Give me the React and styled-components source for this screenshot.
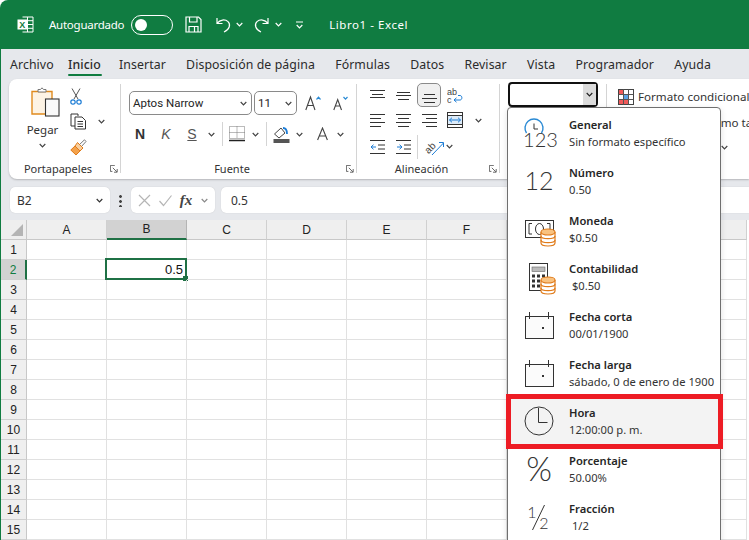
import React from "react";
import styled, { createGlobalStyle } from "styled-components";

const Global = createGlobalStyle`
  html, body { margin: 0; padding: 0; background: #fff; }
  body { font-family: "Noto Sans", "Open Sans", sans-serif; color: #242424; }
  * { box-sizing: border-box; }
`;

const Win = styled.div`
  position: relative; width: 749px; height: 540px; overflow: hidden; background: #fff;
  display: flex; flex-direction: column;
`;
const TitleBar = styled.header`
  height: 49px; flex: none; background: #107c41; color: #fff; display: flex; align-items: center;
  padding-left: 17px; border-top-left-radius: 8px; font-size: 11.5px;
`;
const TitleItem = styled.span`
  display: flex; align-items: center; flex: none; margin-left: ${p => p.$ml || 0}px; letter-spacing: ${p => p.$ls || 0}px;
`;
const Toggle = styled.span`
  width: 42px; height: 20px; border: 1.5px solid #fff; border-radius: 10px; display: flex; align-items: center; padding-left: 3px;
  &::before { content: ""; width: 12px; height: 12px; border-radius: 50%; background: #fff; }
`;
const Body = styled.div`
  flex: 1; min-height: 0; background: #e6e8ec; border-left: 1px solid #107c41; display: flex; flex-direction: column;
`;
const Tabs = styled.nav`
  height: 30px; flex: none; display: flex; padding-left: 9px; gap: 20.2px; font-size: 12.3px;
`;
const Tab = styled.span`
  position: relative; line-height: 31px; white-space: nowrap; color: #2b2b2b; letter-spacing: .1px;
  font-weight: ${p => p.$active ? 500 : 400};
  ${p => p.$active && `margin: 0 -2px 0 -6px; &::after { content:""; position:absolute; left:0; right:-1px; bottom:3px; height:2.5px; border-radius:2px; background:#107c41; }`}
`;
const Ribbon = styled.section`
  height: 100px; flex: none; margin-left: 8px; background: #fff; border-radius: 8px 0 0 8px; display: flex; overflow: hidden;
  box-shadow: 0 1px 2px rgba(0,0,0,.22); padding: 5px 0 1px;
`;
const Group = styled.div`
  position: relative; flex: none; width: ${p => p.$w}px; display: flex; flex-direction: column;
  ${p => !p.$last && `&::after { content:""; position:absolute; top:0; right:0; bottom:5px; width:1px; background:#d4d4d4; }`}
`;
const GroupBody = styled.div`
  flex: 1; min-height: 0; display: flex;
`;
const GroupLabel = styled.div`
  flex: none; height: 18px; line-height: 18px; font-size: 11px; color: #333; padding-right: 14px;
  display: flex; align-items: center; justify-content: center; position: relative;
`;
const Launcher = styled.svg`
  position: absolute; right: 3px; bottom: 5px; width: 8px; height: 8px;
`;
const PasteCol = styled.div`
  width: 61px; display: flex; flex-direction: column; align-items: center; font-size: 11.5px; padding-top: 3px; padding-left: 6px;
`;
const PasteClip = styled.span`
  display: flex; margin-left: 5px;
`;
const PasteLabel = styled.span`
  margin-top: 5px; line-height: 16px; color: #333;
`;
const PasteChev = styled.span`
  display: flex; margin-top: 5px;
`;
const ClipCol = styled.div`
  display: flex; flex-direction: column;
`;
const ClipRow = styled.div`
  height: 26px; display: flex; align-items: center; gap: ${p => p.$gap ?? 11}px;
`;
const FontCol = styled.div`
  display: flex; flex-direction: column; gap: 7px; padding: 7px 0 0 8px;
`;
const FontRow = styled.div`
  height: 24px; display: flex; align-items: center;
`;
const Select = styled.div`
  width: ${p => p.$w}px; height: 24px; margin-right: ${p => p.$mr || 0}px; border: 1px solid #8a8a8a; border-radius: 5px;
  display: flex; align-items: center; justify-content: space-between; padding: 0 4px 0 3px; font-size: 11.5px; color: #242424; flex: none;
  font-family: "Roboto", sans-serif;
`;
const Slot = styled.span`
  display: flex; align-items: center; justify-content: center; flex: none; width: ${p => p.$w}px; margin-left: ${p => p.$ml || 0}px; height: 24px;
`;
const VSep = styled.span`
  flex: none; width: 1px; height: 24px; background: #d4d4d4; margin: 0 ${p => p.$mr ?? 6}px 0 ${p => p.$ml ?? 6}px;
`;
const GlyphBold = styled.span`
  font-size: 14px; font-weight: 700; color: #333; font-family: "Liberation Sans", sans-serif;
`;
const GlyphItalic = styled.span`
  font-size: 14px; font-style: italic; color: #555; font-family: "Liberation Sans", sans-serif;
`;
const GlyphUnder = styled.span`
  font-size: 14px; color: #555; text-decoration: underline; font-family: "Liberation Sans", sans-serif;
`;
const AlignGrid = styled.div`
  display: grid; grid-template-columns: repeat(4, 26px); grid-template-rows: 24px 26px 27px; margin-top: -1px; padding-left: 7px;
  align-items: center; justify-items: center;
`;
const AlignTop = styled.span`
  width: 24px; height: 24px; display: flex; align-items: center; justify-content: center; border-radius: 5px;
  border: ${p => p.$on ? "1px solid #8a8a8a" : "1px solid transparent"}; background: ${p => p.$on ? "#f0f0f0" : "transparent"};
`;
const MergeCell = styled.div`
  justify-self: start; padding-left: 5px; display: flex; align-items: center; gap: 12px;
`;
const OrientCell = styled.div`
  grid-column: 3 / span 2; justify-self: start; display: flex; align-items: center; gap: 1px;
`;
const NumSelect = styled.div`
  margin: -2px 0 0 8px; width: 90px; height: 25px; border: 2px solid #111; border-radius: 4px; display: flex; justify-content: flex-end; background: #fff;
`;
const NumArrow = styled.span`
  width: 13px; background: #dcdcdc; display: flex; align-items: center; justify-content: center;
`;
const StyleCol = styled.div`
  display: flex; flex-direction: column; padding: 0 0 0 11px; font-size: 11.6px; color: #333;
`;
const StyleRow = styled.div`
  height: 25.5px; display: flex; align-items: center; gap: 4px; white-space: nowrap;
`;
const ClippedLabel = styled.span`
  width: 79px; overflow: hidden;
`;
const FormulaBar = styled.div`
  flex: none; height: 26px; margin-top: 8px; display: flex; align-items: stretch; padding-left: 9px;
`;
const Box = styled.div`
  flex: ${p => p.$grow ? 1 : "none"}; width: ${p => p.$w ? p.$w + "px" : "auto"}; margin-left: ${p => p.$ml || 0}px;
  background: #fff; border-radius: ${p => p.$grow ? "5px 0 0 5px" : "5px"}; display: flex; align-items: center; box-shadow: 0 0 1px rgba(0,0,0,.2);
  justify-content: ${p => p.$between ? "space-between" : "flex-start"}; padding: 0 6px 0 ${p => p.$pl ?? 7}px; font-size: 12px; color: #333;
`;
const Dots = styled.span`
  margin-left: 9px; width: 3px; height: 13px; align-self: center;
  background: radial-gradient(circle at center, #444 1.3px, transparent 1.5px) 0 0 / 3px 5px repeat-y;
`;
const Fx = styled.span`
  font-family: "Liberation Serif", serif; font-style: italic; font-weight: 700; font-size: 15px; color: #444;
`;
const Sheet = styled.div`
  flex: none; margin-top: 7px; display: grid; grid-template-columns: 26px repeat(9, 80px); grid-auto-rows: 20px; background: #fff;
  font-family: "Liberation Sans", sans-serif;
`;
const Corner = styled.div`
  background: #eeeeee; border-right: 1px solid #c8c8c8; border-bottom: 1px solid #c8c8c8; position: relative;
  &::after { content:""; position:absolute; right:3px; bottom:3px; border-style:solid; border-width:0 0 12px 12px; border-color:transparent transparent #b4b4b4 transparent; }
`;
const ColHead = styled.div`
  display: flex; align-items: center; justify-content: center; font-size: 12px; color: #222;
  background: ${p => p.$on ? "#d2d2d2" : "#efefef"}; border-right: 1px solid ${p => p.$on ? "#b4b4b4" : "#d0d0d0"};
  border-bottom: ${p => p.$on ? "2px solid #1f7145" : "1px solid #c8c8c8"};
`;
const RowHead = styled.div`
  display: flex; align-items: center; justify-content: center; font-size: 12px; color: ${p => p.$on ? "#107c41" : "#222"};
  background: ${p => p.$on ? "#d2d2d2" : "#efefef"}; border-bottom: 1px solid #d0d0d0;
  border-right: ${p => p.$on ? "2px solid #1f7145" : "1px solid #c8c8c8"};
`;
const Cell = styled.div`
  position: relative; border-right: 1px solid #e1e1e1; border-bottom: 1px solid #e1e1e1; font-size: 13px; color: #111;
  display: flex; align-items: center; justify-content: flex-end; padding-right: 3px;
  ${p => p.$active && `
    &::before { content:""; position:absolute; top:-2px; left:-2px; right:-1px; bottom:-1px; border:2px solid #1f7145; }
    &::after { content:""; position:absolute; right:-2px; bottom:-2px; width:5px; height:5px; background:#1f7145; }
  `}
`;
const Menu = styled.div`
  position: absolute; left: 507px; top: 107px; width: 214px; height: 445px; background: #fff; border: 1px solid #6f6f6f; border-radius: 4px;
  box-shadow: 0 2px 6px rgba(0,0,0,.12);
`;
const Item = styled.div`
  position: relative; height: 48px; display: flex; align-items: center; background: ${p => p.$on ? "#f3f3f3" : "transparent"};
  ${p => p.$on && `&::after { content:""; position:absolute; top:-2px; left:-2px; right:-3px; bottom:-5px; border:5px solid #ed1c24; }`}
`;
const ItemIcon = styled.svg`
  flex: none; width: 61px; height: 48px;
`;
const ItemText = styled.div`
  display: flex; flex-direction: column; margin-top: 2px;
`;
const ItemTitle = styled.span`
  font-size: 11.2px; font-weight: 600; line-height: 17px; color: #262626;
`;
const ItemSub = styled.span`
  font-size: 11.2px; line-height: 17px; color: #333; white-space: pre;
`;

const Chev = ({ c = "#444", w = 7 }) => (
  <svg width={w} height="5" viewBox="0 0 7 5"><path d="M.7 1 3.500 3.800 6.300 1" fill="none" stroke={c} strokeWidth="1.2" /></svg>
);
const S = ({ w = 16, h = 16, vb, children }) => (
  <svg width={w} height={h} viewBox={vb || `0 0 ${w} ${h}`} fill="none" stroke="#333" strokeWidth="1">{children}</svg>
);

const ExcelLogo = () => (
  <svg width="17" height="17" viewBox="0 0 17 17">
    <path d="M5.500 1H16V16H5.500" fill="none" stroke="#fff" strokeWidth="1" />
    <path d="M5.500 4.700H16M5.500 8.500H16M5.500 12.300H16M10.500 1V16" stroke="#fff" strokeWidth="1" />
    <rect x="0.5" y="3.500" width="9.500" height="10" fill="#fff" />
    <text x="5.200" y="12" fontSize="9" fontWeight="700" textAnchor="middle" fill="#107c41" fontFamily="Liberation Sans, sans-serif">X</text>
  </svg>
);
const W = { fill: "none", stroke: "#fff", strokeWidth: 1.2 };
const SaveI = () => (
  <svg width="17" height="17" viewBox="0 0 17 17"><path d="M1 1H13.500L16 3.500V16H1Z" {...W} /><path d="M4.500 1V6H12V1M4 16V10.500H13V16M9.500 10.500V16" {...W} /></svg>
);
const UndoI = () => (
  <svg width="15" height="16" viewBox="0 0 15 16"><path d="M1 1V6.500H6.500M1.300 6.200C4 2.500 9 2 12 4.600 15 7.500 13.500 12.500 8 15" {...W} /></svg>
);
const RedoI = () => (
  <svg width="15" height="16" viewBox="0 0 15 16"><path d="M14 1V6.500H8.500M13.700 6.200C11 2.500 6 2 3 4.600 0 7.500 1.500 12.500 7 15" {...W} /></svg>
);
const Customize = () => (
  <svg width="7" height="8" viewBox="0 0 7 8"><path d="M0 1H7M.7 4 3.500 6.800 6.300 4" {...W} /></svg>
);

const PasteI = () => (
  <svg width="29" height="30" viewBox="0 0 29 30" fill="none">
    <path d="M1 4.500H21V27H1Z" fill="#fdf3e4" stroke="#e08a1e" strokeWidth="1.4" />
    <path d="M7 5V2.500H9.500L11 .8 12.500 2.500H15V5Z" fill="#fff" stroke="#777" />
    <rect x="14.500" y="12" width="13.500" height="17" fill="#fafafa" stroke="#333" strokeWidth="1.1" />
  </svg>
);
const CutI = () => (
  <svg width="12" height="17" viewBox="0 0 12 17" fill="none">
    <path d="M2 .5 8 11M10 .5 4 11" stroke="#555" />
    <circle cx="3" cy="14" r="2.200" stroke="#1c7cd5" strokeWidth="1.200" /><circle cx="9" cy="14" r="2.200" stroke="#1c7cd5" strokeWidth="1.200" />
  </svg>
);
const CopyI = () => (
  <S w={17} h={17}>
    <path d="M5 13H1V1H8V3" /><path d="M5 4H12L15.500 7.500V16H5ZM7.500 8.500H13M7.500 11H13M7.500 13.500H13" />
  </S>
);
const BrushI = () => (
  <svg width="17" height="17" viewBox="0 0 17 17" fill="none">
    <path d="M9 6 14.500 .8 16 2.500 11 8" stroke="#777" />
    <path d="M7.500 3.500 13 9 10 12 5 7Z" fill="#f8cf9e" stroke="#e07b1a" />
    <path d="M5 7 .8 11 6 16 10 12Z" fill="#f3a24c" stroke="#e07b1a" />
  </svg>
);
const LaunchI = () => (
  <Launcher viewBox="0 0 10 10" fill="none" stroke="#444"><path d="M6 .5H.5V8H3" /><path d="M3.500 3.500 8.500 8.500M5 9H9V5" /></Launcher>
);
const GrowA = ({ up }) => (
  <svg width="17" height="17" viewBox="0 0 17 17" fill="none">
    <path d={up ? "M.8 15 5.500 2 10 15M2.500 10.500H8.500" : "M.8 15 4.700 4.500 8.500 15M2.200 11H7.200"} stroke="#444" strokeWidth="1.100" />
    <path d={up ? "M11.500 4.500 13.500 2.200 15.500 4.500" : "M10.500 2 12.500 4.200 14.500 2"} stroke="#2a8ad4" strokeWidth="1.200" />
  </svg>
);
const BordersI = () => (
  <svg width="16" height="16" viewBox="0 0 16 16" fill="none">
    <path d="M.5 .5H15.500V12.500H.5ZM8 .5V12.500M.5 6.500H15.500" stroke="#777" strokeDasharray="1 1" />
    <path d="M0 14.500H16" stroke="#222" strokeWidth="1.400" />
  </svg>
);
const FillI = () => (
  <svg width="17" height="17" viewBox="0 0 17 17" fill="none">
    <path d="M1.500 8 8 2 12 7 6 12Z" stroke="#444" /><path d="M10 2C13 2 14 5 14 8" stroke="#1c7cd5" strokeWidth="1.800" />
    <rect x="0.5" y="13" width="16" height="4" fill="#555" stroke="none" />
  </svg>
);
const FontColor = () => (
  <svg width="11" height="14" viewBox="0 0 11 14" fill="none"><path d="M.6 13 5.500 1 10.400 13M2.200 9H8.800" stroke="#444" strokeWidth="1.100" /></svg>
);
const Lines = ({ rows, w = 15 }) => (
  <svg width={w} height="16" viewBox={`0 0 ${w} 16`} fill="none" stroke="#333">
    {rows.map(([y, a, b], i) => <path key={i} d={`M${a} ${y}H${b}`} />)}
  </svg>
);
const WrapI = () => (
  <svg width="16" height="17" viewBox="0 0 16 17" fill="none">
    <text x="0" y="7.500" fontSize="9" fill="#444" fontFamily="Liberation Sans, sans-serif">ab</text>
    <text x="0" y="15.500" fontSize="9" fill="#444" fontFamily="Liberation Sans, sans-serif">c</text>
    <path d="M7 13H13C15.500 13 15.500 8.500 13 8.500H11M9.500 10.800 7 13 9.500 15.200" stroke="#1c7cd5" />
  </svg>
);
const MergeI = () => (
  <svg width="16" height="16" viewBox="0 0 16 16" fill="none">
    <rect x=".5" y=".5" width="15" height="15" stroke="#333" /><path d="M.5 3.500H15.500M.5 12.500H15.500" stroke="#333" />
    <rect x="1" y="4" width="14" height="8" fill="#dcebf9" />
    <path d="M2.500 8H13.500M5 5.700 2.500 8 5 10.300M11 5.700 13.500 8 11 10.300" stroke="#1c7cd5" />
  </svg>
);
const IndentI = ({ out }) => (
  <svg width="15" height="14" viewBox="0 0 15 14" fill="none">
    <path d="M0 .5H15M8 5H15M8 9H15M0 13.500H15" stroke="#333" />
    <path d={out ? "M6 7H1M3.500 4.700 1 7 3.500 9.300" : "M1 7H6M3.500 4.700 6 7 3.500 9.300"} stroke="#1c7cd5" />
  </svg>
);
const OrientI = () => (
  <svg width="20" height="18" viewBox="0 0 20 18" fill="none">
    <text x="1" y="14" fontSize="10" fill="#444" transform="rotate(-45 5 12)" fontFamily="Liberation Sans, sans-serif">ab</text>
    <path d="M7 17 18.500 5M14 4.500H18.500V9" stroke="#1c7cd5" />
  </svg>
);
const CondI = () => (
  <svg width="16" height="16" viewBox="0 0 16 16" fill="none">
    <rect x=".5" y=".5" width="15" height="15" fill="#fff" stroke="#444" />
    <rect x="1" y="1" width="4.500" height="4.500" fill="#f05a5a" /><rect x="1" y="10.500" width="9" height="4.500" fill="#f05a5a" /><rect x="5.500" y="5.500" width="4.500" height="4.500" fill="#5aa4e6" />
    <path d="M5.500 .5V15.500M10.500 .5V15.500M.5 5.500H15.500M.5 10.500H15.500" stroke="#555" />
  </svg>
);

const T = { fontFamily: "Lato, 'Open Sans', sans-serif", fontWeight: 300, fill: "#333", stroke: "none" };
const Coins = ({ x = 40, y = 26 }) => (
  <g fill="#fff" stroke="#e07b1a" strokeWidth="1.200">
    <path d={`M${x - 7} ${y}V${y + 11}C${x - 7} ${y + 15} ${x + 7} ${y + 15} ${x + 7} ${y + 11}V${y}`} />
    <ellipse cx={x} cy={y} rx="7" ry="3" fill="#f9c27f" />
    <path d={`M${x - 7} ${y + 4}C${x - 7} ${y + 7.500} ${x + 7} ${y + 7.500} ${x + 7} ${y + 4}M${x - 7} ${y + 8}C${x - 7} ${y + 11.500} ${x + 7} ${y + 11.500} ${x + 7} ${y + 8}`} fill="none" />
  </g>
);
const CalIcon = ({ top = 16 }) => (
  <g fill="none" stroke="#333">
    <rect x="17.500" y={top + .5} width="28" height="22" fill="#fbfbfb" />
    <path d={`M21.500 ${top - 4}V${top + 3}M40.500 ${top - 4}V${top + 3}`} />
    <rect x="34" y={top + 11} width="2" height="2" fill="#333" stroke="none" />
  </g>
);
const icons = {
  general: <>
    <path d="M18.500 25A9 9 0 1 1 33.500 25" fill="none" stroke="#2a8ad4" strokeWidth="1.400" />
    <path d="M26 15.500V21H30" fill="none" stroke="#333" />
    <text x="32.500" y="39" fontSize="20" textAnchor="middle" style={T}>123</text>
  </>,
  number: <text x="31" y="34" fontSize="25" textAnchor="middle" style={T}>12</text>,
  money: <g>
    <rect x="17.500" y="16.500" width="28" height="17" fill="none" stroke="#333" />
    <path d="M24 19.500H21V30H24M39 19.500H42V30H39" fill="none" stroke="#333" />
    <ellipse cx="31.500" cy="25" rx="4" ry="5.500" fill="none" stroke="#333" />
    <Coins y={28} />
  </g>,
  account: <g>
    <rect x="21.500" y="11.500" width="18" height="27" fill="#fff" stroke="#333" />
    <rect x="24" y="15" width="13" height="4.500" fill="#bbb" stroke="#666" strokeWidth=".6" />
    {[0, 1, 2].map(r => [0, 1, 2].map(c => <rect key={r + "" + c} x={24 + c * 5} y={22.500 + r * 5} width="3" height="3" fill="#333" />))}
    <Coins y={28} />
  </g>,
  shortDate: <CalIcon top={16} />,
  longDate: <CalIcon top={16} />,
  time: <>
    <circle cx="31" cy="25" r="14" fill="none" stroke="#333" />
    <path d="M30.500 12V26.500H39.500" fill="none" stroke="#333" />
  </>,
  percent: <text x="31" y="37" fontSize="33" textAnchor="middle" style={T}>%</text>,
  fraction: <>
    <text x="24" y="26" fontSize="16" textAnchor="middle" style={T}>1</text>
    <path d="M24.500 38 36.500 13" stroke="#333" fill="none" />
    <text x="36" y="37" fontSize="16" textAnchor="middle" style={T}>2</text>
  </>,
};
const items = [
  ["general", "General", "Sin formato específico"],
  ["number", "Número", "0.50"],
  ["money", "Moneda", "$0.50"],
  ["account", "Contabilidad", " $0.50"],
  ["shortDate", "Fecha corta", "00/01/1900"],
  ["longDate", "Fecha larga", "sábado, 0 de enero de 1900"],
  ["time", "Hora", "12:00:00 p. m."],
  ["percent", "Porcentaje", "50.00%"],
  ["fraction", "Fracción", " 1/2"],
];

const tabs = ["Archivo", "Inicio", "Insertar", "Disposición de página", "Fórmulas", "Datos", "Revisar", "Vista", "Programador", "Ayuda"];
const cols = ["A", "B", "C", "D", "E", "F", "G", "H", "I"];
const rows = Array.from({ length: 15 }, (_, i) => i + 1);

export default function App() {
  return (
    <Win>
      <Global />
      <TitleBar>
        <ExcelLogo />
        <TitleItem $ml={15} $ls={-0.25}>Autoguardado</TitleItem>
        <TitleItem $ml={7}><Toggle /></TitleItem>
        <TitleItem $ml={12}><SaveI /></TitleItem>
        <TitleItem $ml={14}><UndoI /></TitleItem>
        <TitleItem $ml={5}><Chev c="#fff" /></TitleItem>
        <TitleItem $ml={11}><RedoI /></TitleItem>
        <TitleItem $ml={6}><Chev c="#fff" /></TitleItem>
        <TitleItem $ml={14}><Customize /></TitleItem>
        <TitleItem $ml={26} $ls={0.55}>Libro1 - Excel</TitleItem>
      </TitleBar>
      <Body>
        <Tabs>
          {tabs.map(t => <Tab key={t} $active={t === "Inicio"}>{t}</Tab>)}
        </Tabs>
        <Ribbon>
          <Group $w={112}>
            <GroupBody>
              <PasteCol>
                <PasteClip><PasteI /></PasteClip>
                <PasteLabel>Pegar</PasteLabel>
                <PasteChev><Chev /></PasteChev>
              </PasteCol>
              <ClipCol>
                <ClipRow><CutI /></ClipRow>
                <ClipRow><CopyI /><Chev /></ClipRow>
                <ClipRow><BrushI /></ClipRow>
              </ClipCol>
            </GroupBody>
            <GroupLabel>Portapapeles<LaunchI /></GroupLabel>
          </Group>
          <Group $w={236}>
            <GroupBody>
              <FontCol>
                <FontRow>
                  <Select $w={123} $mr={2}>Aptos Narrow<Chev /></Select>
                  <Select $w={43}>11<Chev /></Select>
                  <Slot $w={18} $ml={7}><GrowA up /></Slot>
                  <Slot $w={18} $ml={10}><GrowA /></Slot>
                </FontRow>
                <FontRow>
                  <Slot $w={14} $ml={4}><GlyphBold>N</GlyphBold></Slot>
                  <Slot $w={14} $ml={12}><GlyphItalic>K</GlyphItalic></Slot>
                  <Slot $w={14} $ml={12}><GlyphUnder>S</GlyphUnder></Slot>
                  <Slot $w={8} $ml={8}><Chev /></Slot>
                  <VSep $ml={7} $mr={6} />
                  <Slot $w={16}><BordersI /></Slot>
                  <Slot $w={8} $ml={6}><Chev /></Slot>
                  <VSep $ml={7} $mr={6} />
                  <Slot $w={17}><FillI /></Slot>
                  <Slot $w={8} $ml={5}><Chev /></Slot>
                  <Slot $w={12} $ml={13}><FontColor /></Slot>
                  <Slot $w={8} $ml={8}><Chev /></Slot>
                </FontRow>
              </FontCol>
            </GroupBody>
            <GroupLabel>Fuente<LaunchI /></GroupLabel>
          </Group>
          <Group $w={143}>
            <GroupBody>
              <AlignGrid>
                <AlignTop><Lines rows={[[3.500, 0, 15], [7.500, 2, 13], [10.500, 0, 15]]} /></AlignTop>
                <AlignTop><Lines rows={[[5.500, 1, 14], [8.500, 0, 15], [12.500, 2, 13]]} /></AlignTop>
                <AlignTop $on><Lines rows={[[7.500, 2, 13], [11.500, 0, 15], [15.500, 2, 13]]} /></AlignTop>
                <WrapI />
                <Lines rows={[[2.500, 0, 15], [6.500, 0, 11], [10.500, 0, 15], [14.500, 0, 11]]} />
                <Lines rows={[[2.500, 0, 15], [6.500, 2, 13], [10.500, 0, 15], [14.500, 2, 13]]} />
                <Lines rows={[[2.500, 0, 15], [6.500, 4, 15], [10.500, 0, 15], [14.500, 4, 15]]} />
                <MergeCell><MergeI /><Chev /></MergeCell>
                <IndentI out />
                <IndentI />
                <OrientCell><VSep $ml={1} $mr={6} /><OrientI /><Chev /></OrientCell>
              </AlignGrid>
            </GroupBody>
            <GroupLabel>Alineación<LaunchI /></GroupLabel>
          </Group>
          <Group $w={107}>
            <NumSelect><NumArrow><Chev c="#222" /></NumArrow></NumSelect>
          </Group>
          <Group $w={180} $last>
            <StyleCol>
              <StyleRow><CondI />Formato condicional</StyleRow>
              <StyleRow><CondI />Dar formato como tabla</StyleRow>
              <StyleRow><CondI /><ClippedLabel>Estilos de celda</ClippedLabel><Chev /></StyleRow>
            </StyleCol>
          </Group>
        </Ribbon>
        <FormulaBar>
          <Box $w={100} $between>B2<Chev c="#333" w={9} /></Box>
          <Dots />
          <Box $w={84} $ml={9} $between>
            <svg width="13" height="13" viewBox="0 0 13 13" fill="none" stroke="#b5b5b5" strokeWidth="1.200"><path d="M1 1 12 12M12 1 1 12" /></svg>
            <svg width="13" height="13" viewBox="0 0 13 13" fill="none" stroke="#b5b5b5" strokeWidth="1.200"><path d="M.5 7 4.500 11.500 12.500 1.500" /></svg>
            <Fx>fx</Fx>
            <Chev c="#888" w={9} />
          </Box>
          <Box $grow $ml={6} $pl={10}>0.5</Box>
        </FormulaBar>
        <Sheet>
          <Corner />
          {cols.map(c => <ColHead key={c} $on={c === "B"}>{c}</ColHead>)}
          {rows.map(r => (
            <React.Fragment key={r}>
              <RowHead $on={r === 2}>{r}</RowHead>
              {cols.map(c => {
                const active = r === 2 && c === "B";
                return <Cell key={c} $active={active}>{active ? "0.5" : null}</Cell>;
              })}
            </React.Fragment>
          ))}
        </Sheet>
      </Body>
      <Menu>
        {items.map(([k, t, s]) => (
          <Item key={k} $on={k === "time"}>
            <ItemIcon viewBox="0 0 61 48">{icons[k]}</ItemIcon>
            <ItemText>
              <ItemTitle>{t}</ItemTitle>
              <ItemSub>{s}</ItemSub>
            </ItemText>
          </Item>
        ))}
      </Menu>
    </Win>
  );
}
